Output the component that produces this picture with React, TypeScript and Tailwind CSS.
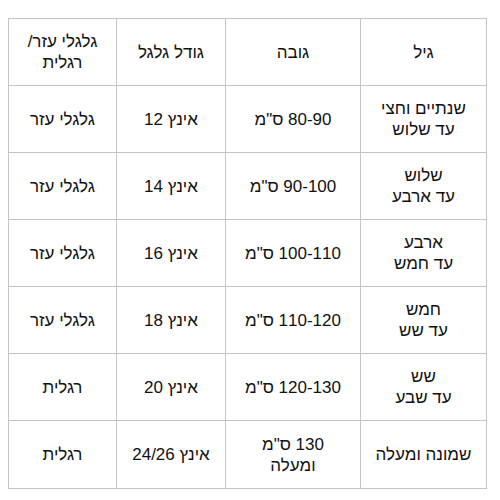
import React from 'react';

const ROWS: string[][] = [
  ['שנתיים וחצי\nעד שלוש', '80-90 ס"מ', 'אינץ 12', 'גלגלי עזר'],
  ['שלוש\nעד ארבע', '90-100 ס"מ', 'אינץ 14', 'גלגלי עזר'],
  ['ארבע\nעד חמש', '100-110 ס"מ', 'אינץ 16', 'גלגלי עזר'],
  ['חמש\nעד שש', '110-120 ס"מ', 'אינץ 18', 'גלגלי עזר'],
  ['שש\nעד שבע', '120-130 ס"מ', 'אינץ 20', 'רגלית'],
  ['שמונה ומעלה', '130 ס"מ\nומעלה', 'אינץ 24/26', 'רגלית'],
];

const HEAD = ['גיל', 'גובה', 'גודל גלגל', 'גלגלי עזר/\nרגלית'];
const WIDTHS = ['w-[126px]', 'w-[135px]', 'w-[109px]', 'w-[108px]'];

function Cell({ text, width }: { text: string; width: string }) {
  return (
    <td className={`${width} border border-[#c4c4c4] text-center align-middle whitespace-pre-line px-2`}>
      {text}
    </td>
  );
}

export default function App() {
  return (
    <div className="w-[500px] h-[500px] bg-white pt-[18px] pl-[8px]" style={{ fontFamily: '"Liberation Sans", Arial, sans-serif' }}>
      <table dir="rtl" className="border-collapse w-[479px] table-fixed text-[17px] leading-[21px] text-[#111]">
        <thead>
          <tr className="h-[67px]">
            {HEAD.map((h, i) => (
              <th key={i} className={`${WIDTHS[i]} border border-[#c4c4c4] text-center align-middle whitespace-pre-line font-normal px-2`}>
                {h}
              </th>
            ))}
          </tr>
        </thead>
        <tbody>
          {ROWS.map((row, r) => (
            <tr key={r} className={r === 5 ? 'h-[68px]' : 'h-[67px]'}>
              {row.map((c, i) => (
                <Cell key={i} text={c} width={WIDTHS[i]} />
              ))}
            </tr>
          ))}
        </tbody>
      </table>
    </div>
  );
}
